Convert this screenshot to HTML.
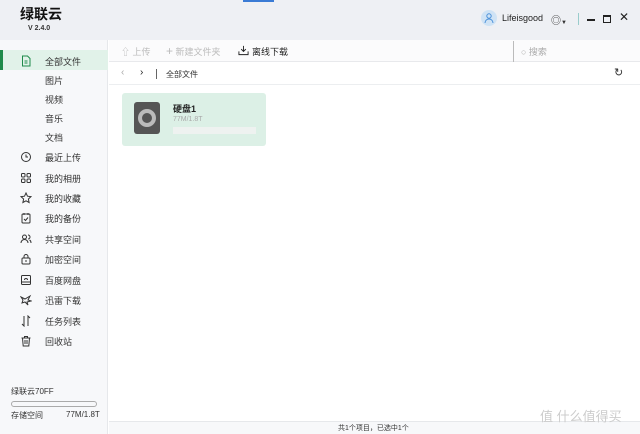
<!DOCTYPE html><html><head><meta charset="utf-8"><style>
*{margin:0;padding:0;box-sizing:border-box}
body{width:640px;height:434px;overflow:hidden;font-family:"Liberation Sans","Noto Sans CJK SC",sans-serif;font-size:9px;color:#333;background:#fff;position:relative}
.a{position:absolute}
.hdr{left:0;top:0;width:640px;height:40px;background:#eef0f4}
.side{left:0;top:40px;width:108px;height:394px;background:#f7f8fa;border-right:1px solid #e6e8eb}
.it{position:absolute;left:45px;font-size:9px;color:#333}
.ic{position:absolute;left:20px;width:12px;height:12px}
</style></head><body>
<div class="a hdr"></div>
<div class="a" style="left:243px;top:0;width:31px;height:2px;background:#3a7bd5"></div>
<div class="a" style="left:20px;top:5px;font-size:14px;font-weight:bold;color:#111;line-height:18px">绿联云</div>
<div class="a" style="left:28px;top:25px;font-size:7px;color:#333;font-weight:bold">V 2.4.0</div>
<div class="a" style="left:481px;top:10px;width:16px;height:16px;border-radius:50%;background:#cfe3f5"></div>
<svg class="a" style="left:483px;top:12px" width="12" height="12" viewBox="0 0 12 12" fill="none" stroke="#4a90d9" stroke-width="1"><circle cx="6" cy="4" r="2.2"/><path d="M2 11c0-2.5 2-4 4-4s4 1.5 4 4"/></svg>
<div class="a" style="left:502px;top:13px;font-size:9px;color:#222">Lifeisgood</div>
<div class="a" style="left:551px;top:12px;font-size:10px;color:#333">◎<span style="font-size:6px">▼</span></div>
<div class="a" style="left:578px;top:13px;width:1px;height:12px;background:#9cc"></div>
<div class="a" style="left:587px;top:19px;width:8px;height:1.5px;background:#222"></div>
<div class="a" style="left:603px;top:15px;width:8px;height:8px;border:1.3px solid #222;border-top-width:2px"></div>
<div class="a" style="left:619px;top:10px;font-size:12px;color:#222">✕</div>

<div class="a side"></div>
<div class="a" style="left:0;top:50px;width:108px;height:20px;background:#e1f2e9"></div>
<div class="a" style="left:0;top:50px;width:3px;height:20px;background:#1e8a4a"></div>
<svg class="ic" style="top:55px" viewBox="0 0 12 12" fill="none" stroke="#1e8a4a" stroke-width="1"><path d="M2.5 1h5l2.5 2.5V11h-7.5z M4.5 6h3M4.5 8h3"/></svg>
<div class="it" style="top:55px">全部文件</div>
<div class="it" style="top:74px">图片</div>
<div class="it" style="top:93px">视频</div>
<div class="it" style="top:112px">音乐</div>
<div class="it" style="top:131px">文档</div>
<svg class="ic" style="top:151px" viewBox="0 0 12 12" fill="none" stroke="#333"><circle cx="6" cy="6" r="4.5"/><path d="M6 3.5V6h2"/></svg>
<div class="it" style="top:151px">最近上传</div>
<svg class="ic" style="top:172px" viewBox="0 0 12 12" fill="none" stroke="#333"><rect x="1.5" y="1.5" width="3.5" height="3.5" rx="1"/><rect x="7" y="1.5" width="3.5" height="3.5" rx="1"/><rect x="1.5" y="7" width="3.5" height="3.5" rx="1"/><rect x="7" y="7" width="3.5" height="3.5" rx="1"/></svg>
<div class="it" style="top:172px">我的相册</div>
<svg class="ic" style="top:192px" viewBox="0 0 12 12" fill="none" stroke="#333"><path d="M6 1l1.5 3.2 3.5.4-2.6 2.4.7 3.5L6 8.8 2.9 10.5l.7-3.5L1 4.6l3.5-.4z"/></svg>
<div class="it" style="top:192px">我的收藏</div>
<svg class="ic" style="top:212px" viewBox="0 0 12 12" fill="none" stroke="#333"><rect x="2" y="2" width="8" height="9" rx="1"/><path d="M4 1v2M8 1v2M4 7l1.5 1.5L8 5.5"/></svg>
<div class="it" style="top:212px">我的备份</div>
<svg class="ic" style="top:233px" viewBox="0 0 12 12" fill="none" stroke="#333"><circle cx="4.5" cy="4" r="2"/><path d="M1 10c0-2 1.5-3.5 3.5-3.5S8 8 8 10M8 2a2 2 0 010 4M9.5 7c1 .5 1.5 1.5 1.5 3"/></svg>
<div class="it" style="top:233px">共享空间</div>
<svg class="ic" style="top:253px" viewBox="0 0 12 12" fill="none" stroke="#333"><rect x="2" y="5" width="8" height="6" rx="1"/><path d="M4 5V3.5a2 2 0 014 0V5M6 7v2"/></svg>
<div class="it" style="top:253px">加密空间</div>
<svg class="ic" style="top:274px" viewBox="0 0 12 12" fill="none" stroke="#333"><rect x="1.5" y="1.5" width="9" height="9" rx="1"/><path d="M1.5 8h9M4.5 6a1.5 1.5 0 013 0"/></svg>
<div class="it" style="top:274px">百度网盘</div>
<svg class="ic" style="top:294px" viewBox="0 0 12 12" fill="none" stroke="#333"><path d="M1 3l4 2 5-3-2 4 3 1-4 1 1 3-3-3-3 1 1-3z"/></svg>
<div class="it" style="top:294px">迅雷下载</div>
<svg class="ic" style="top:315px" viewBox="0 0 12 12" fill="none" stroke="#333"><path d="M4 1v10L2 9M8 11V1l2 2"/></svg>
<div class="it" style="top:315px">任务列表</div>
<svg class="ic" style="top:335px" viewBox="0 0 12 12" fill="none" stroke="#333"><path d="M1.5 3h9M4.5 3V1.5h3V3M2.5 3l.7 8h5.6l.7-8M5 5v4M7 5v4"/></svg>
<div class="it" style="top:335px">回收站</div>
<div class="a" style="left:11px;top:386px;font-size:8px;color:#333">绿联云70FF</div>
<div class="a" style="left:11px;top:401px;width:86px;height:6px;border:1px solid #aaa;border-radius:3px"></div>
<div class="a" style="left:11px;top:410px;font-size:8px">存储空间</div>
<div class="a" style="left:66px;top:410px;font-size:8px">77M/1.8T</div>

<div class="a" style="left:109px;top:40px;width:531px;height:22px;background:#fbfbfc;border-bottom:1px solid #e8e9ec"></div>
<div class="a" style="left:121px;top:45px;font-size:9px;color:#bbb">⇧ 上传</div>
<div class="a" style="left:166px;top:44px;font-size:9px;color:#bbb"><span style="font-size:12px">+</span> 新建文件夹</div>
<svg class="a" style="left:238px;top:45px" width="11" height="11" viewBox="0 0 12 12" fill="none" stroke="#222"><path d="M6 1v6M3.5 4.5L6 7l2.5-2.5M1 7v3.5h10V7"/></svg>
<div class="a" style="left:252px;top:45px;font-size:9px;color:#222">离线下载</div>
<div class="a" style="left:513px;top:41px;width:1px;height:21px;background:#bbb"></div>
<div class="a" style="left:521px;top:45px;font-size:9px;color:#aaa">○ 搜索</div>
<div class="a" style="left:109px;top:62px;width:531px;height:23px;border-bottom:1px solid #eceef0"></div>
<div class="a" style="left:121px;top:67px;font-size:10px;color:#aaa">‹</div>
<div class="a" style="left:140px;top:67px;font-size:10px;color:#222">›</div>
<div class="a" style="left:156px;top:69px;width:1px;height:10px;background:#666"></div>
<div class="a" style="left:166px;top:69px;font-size:8px;color:#333">全部文件</div>
<div class="a" style="left:614px;top:66px;font-size:11px;color:#333">↻</div>

<div class="a" style="left:122px;top:93px;width:144px;height:53px;background:#dcf0e6;border-radius:3px"></div>
<div class="a" style="left:134px;top:102px;width:26px;height:32px;background:#555;border-radius:3px"></div>
<div class="a" style="left:138px;top:109px;width:18px;height:18px;border-radius:50%;border:4px solid #bbb;background:#555"></div>
<div class="a" style="left:173px;top:102px;font-size:9px;font-weight:bold;color:#222">硬盘1</div>
<div class="a" style="left:173px;top:116px;font-size:7px;color:#aaa">77M/1.8T</div>
<div class="a" style="left:173px;top:127px;width:83px;height:7px;background:#eef2f0"></div>

<div class="a" style="left:109px;top:421px;width:531px;height:13px;background:#f7f8fa;border-top:1px solid #e6e8eb"></div>
<div class="a" style="left:338px;top:423px;font-size:7px;color:#333">共1个项目，已选中1个</div>
<div class="a" style="left:540px;top:406px;font-size:13px;color:#ccc">值 什么值得买</div>
</body></html>
